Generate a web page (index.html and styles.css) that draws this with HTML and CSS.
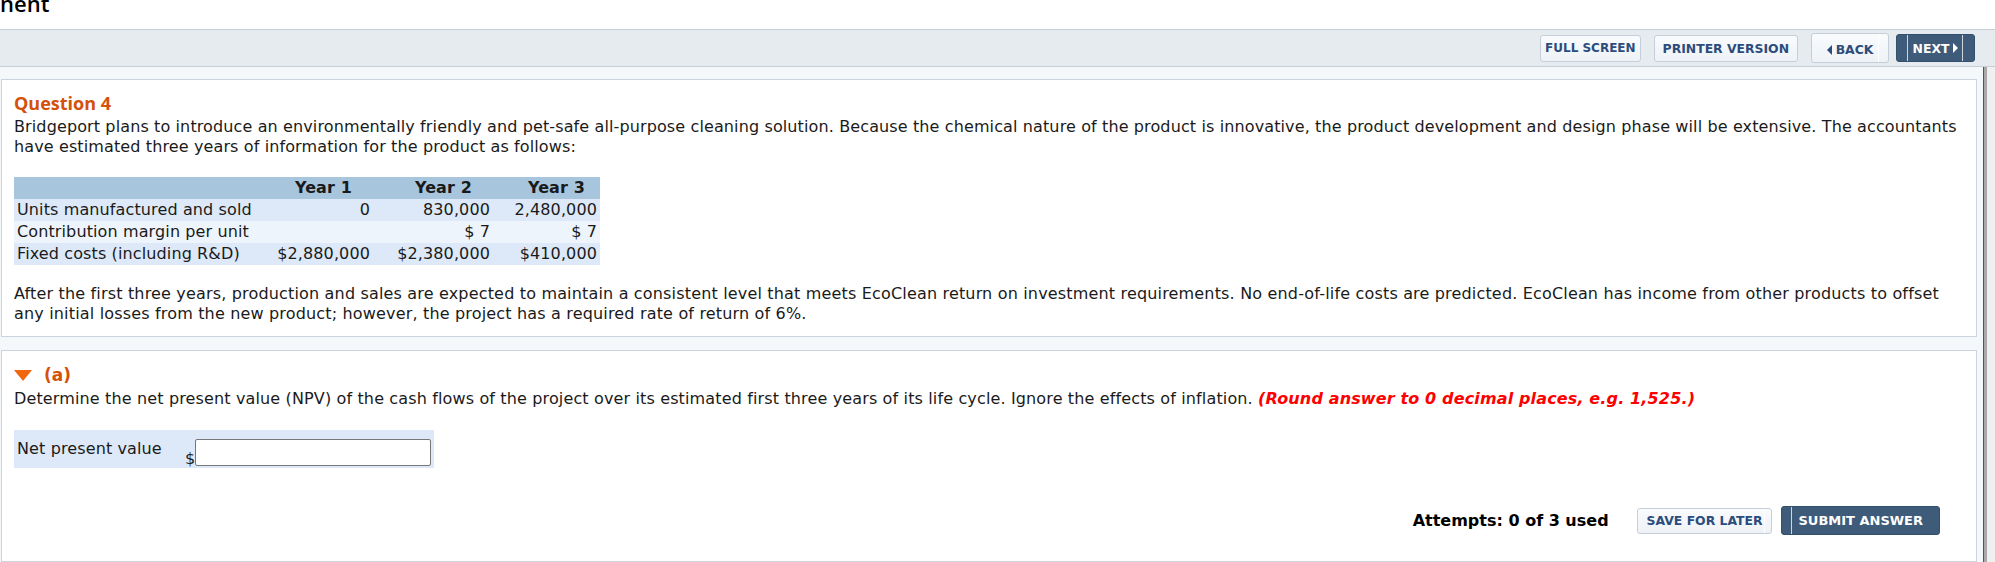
FILE: index.html
```html
<!DOCTYPE html>
<html>
<head>
<meta charset="utf-8">
<link rel="stylesheet" href="styles.css">
</head>
<body>
<div class="title"><span class="title-text">nent</span></div>
<div class="toolbar">
  <button class="btn light fs">FULL SCREEN</button>
  <button class="btn light">PRINTER VERSION</button>
  <button class="btn light back"><span class="tri-left"></span>BACK</button>
  <button class="btn dark next">NEXT<span class="tri-right"></span></button>
</div>
<div class="main">
  <div class="content">
    <div class="card">
      <div class="qtitle">Question 4</div>
      <p class="para">Bridgeport plans to introduce an environmentally friendly and pet-safe all-purpose cleaning solution. Because the chemical nature of the product is innovative, the product development and design phase will be extensive. The accountants have estimated three years of information for the product as follows:</p>
      <table class="data">
        <colgroup>
          <col class="w-lbl"><col class="w-c1"><col class="w-c2"><col class="w-c3">
        </colgroup>
        <thead>
          <tr><th></th><th class="h1">Year 1</th><th class="h2">Year 2</th><th class="h3">Year 3</th></tr>
        </thead>
        <tbody>
          <tr class="r1"><td class="lbl">Units manufactured and sold</td><td>0</td><td>830,000</td><td>2,480,000</td></tr>
          <tr class="r2"><td class="lbl">Contribution margin per unit</td><td></td><td>$ 7</td><td>$ 7</td></tr>
          <tr class="r1"><td class="lbl">Fixed costs (including R&amp;D)</td><td>$2,880,000</td><td>$2,380,000</td><td>$410,000</td></tr>
        </tbody>
      </table>
      <p class="para after">After the first three years, production and sales are expected to maintain a consistent level that meets EcoClean return on investment requirements. No end-of-life costs are predicted. EcoClean has income from other products to offset any initial losses from the new product; however, the project has a required rate of return of 6%.</p>
    </div>
    <div class="card part">
      <div class="ptitle"><span class="tri-down"></span>(a)</div>
      <p class="para">Determine the net present value (NPV) of the cash flows of the project over its estimated first three years of its life cycle. Ignore the effects of inflation. <em class="hint">(Round answer to 0 decimal places, e.g. 1,525.)</em></p>
      <div class="answer">
        <span class="alabel">Net present value</span>
        <span class="dollar">$</span>
        <span class="inputbox"></span>
      </div>
      <div class="footer">
        <span class="attempts">Attempts: 0 of 3 used</span>
        <button class="btn light small">SAVE FOR LATER</button>
        <button class="btn dark submit">SUBMIT ANSWER</button>
      </div>
    </div>
  </div>
  <div class="scrollbar"></div>
  <div class="scrollrest"></div>
</div>
</body>
</html>
```

FILE: styles.css
```css
html, body {
  margin: 0;
  padding: 0;
}
body {
  width: 1995px;
  height: 562px;
  overflow: hidden;
  background: #ffffff;
  font-family: "DejaVu Sans", Verdana, sans-serif;
  color: #1a1a1a;
}
.title {
  height: 29px;
  overflow: hidden;
}
.title-text {
  display: block;
  margin-top: -9px;
  font-family: "Open Sans", "DejaVu Sans", sans-serif;
  font-weight: 600;
  font-size: 22px;
  line-height: 24px;
  color: #000;
}
.toolbar {
  height: 36px;
  border-top: 1px solid #c6cfd9;
  border-bottom: 1px solid #c6cfd9;
  background: #e6ebf0;
  display: flex;
  justify-content: flex-end;
  align-items: center;
  gap: 13px;
  padding-right: 20px;
}
.btn {
  font-family: "DejaVu Sans", Verdana, sans-serif;
  font-weight: bold;
  font-size: 12.4px;
  border-radius: 3px;
  padding: 0 8px;
  height: 27px;
  display: inline-flex;
  align-items: center;
  justify-content: center;
  gap: 4px;
}
.btn.fs {
  padding: 0 4px;
  font-size: 12px;
}
.btn.light {
  background: linear-gradient(#f9fbfd, #eef2f6);
  border: 1px solid #c5cfda;
  color: #2b4c7c;
}
.btn.dark {
  background: #3e5b79;
  border: 1px solid #33506c;
  color: #ffffff;
}
.btn.back {
  height: 30px;
  width: 78px;
  padding-top: 3px;
  background:
    linear-gradient(to left, transparent 9px, rgba(255,255,255,0.9) 9px, rgba(255,255,255,0.9) 10px, transparent 10px),
    linear-gradient(#f9fbfd, #eef2f6);
}
.btn.next {
  height: 28px;
  width: 79px;
  margin-left: -6px;
  background:
    linear-gradient(to right, transparent 10px, rgba(255,255,255,0.75) 10px, rgba(255,255,255,0.75) 11px, transparent 11px),
    linear-gradient(to left, transparent 11px, rgba(255,255,255,0.75) 11px, rgba(255,255,255,0.75) 12px, transparent 12px),
    #3e5b79;
}
.tri-left {
  width: 0; height: 0;
  border-top: 5px solid transparent;
  border-bottom: 5px solid transparent;
  border-right: 5px solid #2b4c7c;
}
.tri-right {
  width: 0; height: 0;
  border-top: 5px solid transparent;
  border-bottom: 5px solid transparent;
  border-left: 5px solid #ffffff;
}
.main {
  display: flex;
  background: #f5f8fb;
  height: 495px;
}
.content {
  width: 1976px;
  padding: 12px 0 0 1px;
  display: flex;
  flex-direction: column;
  gap: 13px;
}
.scrollbar {
  width: 3px;
  margin-left: 6px;
  background: #a9a9a9;
  border-left: 1px solid #555;
}
.scrollrest {
  flex: 1;
  background: #f0f0f0;
}
.card {
  background: #ffffff;
  border: 1px solid #cbd4df;
  padding: 14px 12px 12px 12px;
}
.qtitle {
  font-family: "Open Sans", "DejaVu Sans", sans-serif;
  font-weight: bold;
  font-size: 18px;
  color: #d4510a;
  line-height: 20px;
  margin-top: -1px;
}
.para {
  margin: 4px 0 0 0;
  font-size: 16px;
  letter-spacing: 0.12px;
  line-height: 20px;
}
.data {
  border-collapse: collapse;
  table-layout: fixed;
  width: 586px;
  margin-top: 20px;
  font-size: 16px;
  letter-spacing: 0.12px;
  line-height: 20px;
}
.w-lbl { width: 254px; }
.w-c1 { width: 105px; }
.w-c2 { width: 120px; }
.w-c3 { width: 107px; }
.data th {
  background: #a7c6de;
  font-weight: bold;
  text-align: right;
  height: 22px;
  padding: 0 2px 0 0;
  white-space: nowrap;
}
.data th.h1 { padding-right: 21px; }
.data th.h2 { padding-right: 21px; }
.data th.h3 { padding-right: 15px; }
.data td {
  text-align: right;
  height: 22px;
  padding: 0 3px 0 0;
  white-space: nowrap;
}
.data td.lbl {
  text-align: left;
  padding-left: 3px;
}
.data tr.r1 td { background: #dde9f8; }
.data tr.r2 td { background: #eef4fc; }
.after {
  margin-top: 19px;
  letter-spacing: 0.17px;
}
.part {
  flex: 1;
  padding-top: 14px;
}
.ptitle {
  color: #d4510a;
  font-weight: bold;
  font-size: 17px;
  line-height: 20px;
  display: flex;
  align-items: center;
  gap: 12px;
}
.tri-down {
  width: 0; height: 0;
  border-left: 9px solid transparent;
  border-right: 9px solid transparent;
  border-top: 11px solid #f2660d;
}
.part .para {
  margin-top: 4px;
  letter-spacing: 0.14px;
}
.hint {
  color: #ff0000;
  font-weight: bold;
}
.answer {
  margin-top: 21px;
  width: 420px;
  height: 38px;
  background: #dde9f8;
  display: flex;
  align-items: flex-end;
  padding: 0 0 0 3px;
  box-sizing: border-box;
  font-size: 16px;
  letter-spacing: 0.12px;
}
.alabel {
  align-self: flex-start;
  margin-top: 9px;
  width: 168px;
}
.dollar {
  font-size: 16px;
  line-height: 18px;
  color: #222;
}
.inputbox {
  width: 234px;
  height: 25px;
  border: 1px solid #777;
  border-radius: 2px;
  background: #fff;
  margin-bottom: 2px;
}
.footer {
  display: flex;
  justify-content: flex-end;
  align-items: center;
  margin-top: 38px;
  padding-right: 24px;
}
.attempts {
  font-weight: bold;
  font-size: 16px;
  color: #000;
  margin-right: 28px;
}
.btn.small {
  height: 26px;
  font-size: 12.4px;
  padding: 0 9px;
  margin-right: 9px;
  background:
    linear-gradient(to left, transparent 6px, rgba(255,255,255,0.9) 6px, rgba(255,255,255,0.9) 7px, transparent 7px),
    linear-gradient(#f9fbfd, #eef2f6);
}
.btn.submit {
  height: 29px;
  font-size: 13px;
  padding: 0 16px;
  background:
    linear-gradient(to right, transparent 9px, rgba(255,255,255,0.75) 9px, rgba(255,255,255,0.75) 10px, transparent 10px),
    #3e5b79;
}
```
